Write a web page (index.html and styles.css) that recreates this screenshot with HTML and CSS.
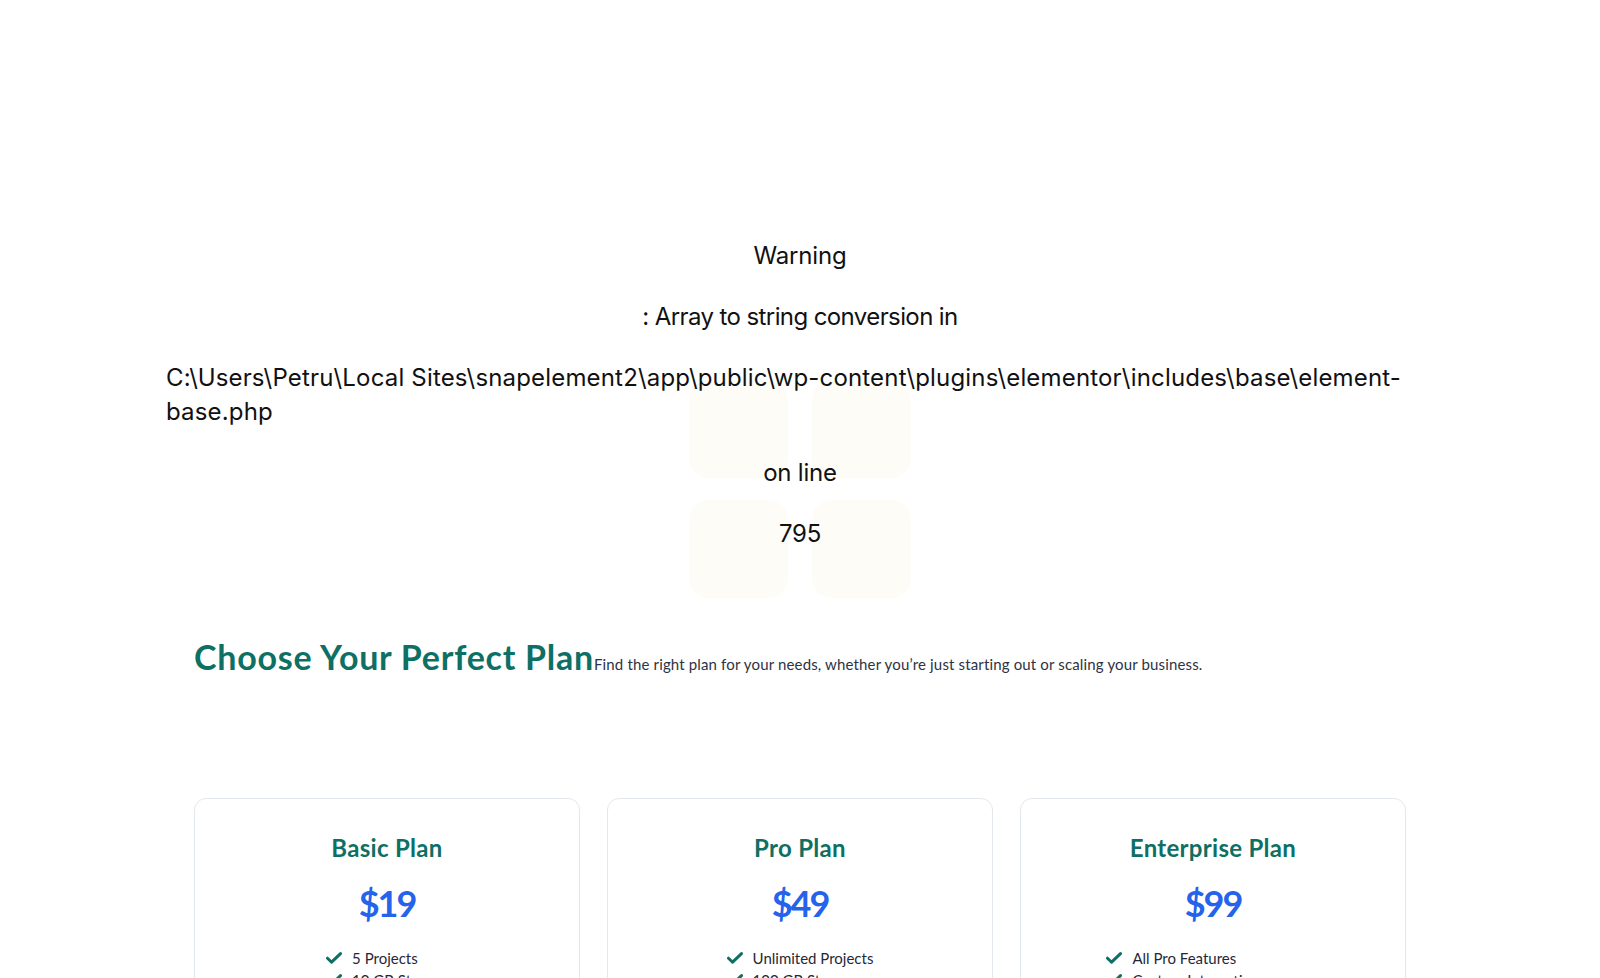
FILE: index.html
```html
<!DOCTYPE html>
<html lang="en">
<head>
<meta charset="utf-8">
<title>Pricing</title>
<link rel="stylesheet" href="styles.css">
</head>
<body>
<main class="page">
  <section class="warning">
    <div class="deco" aria-hidden="true">
      <span class="tile"></span><span class="tile"></span>
      <span class="tile"></span><span class="tile"></span>
    </div>
    <div class="wline"><b>Warning</b></div>
    <div class="wline tight">: Array to string conversion in</div>
    <div class="wline path"><b>C:\Users\Petru\Local Sites\snapelement2\app\public\wp-content\plugins\elementor\includes\base\element-base.php</b></div>
    <div class="wline">on line</div>
    <div class="wline"><b>795</b></div>
  </section>

  <section class="pricing">
    <header class="pricing-head">
      <h2 class="pricing-title">Choose Your Perfect Plan</h2>
      <p class="pricing-sub">Find the right plan for your needs, whether you’re just starting out or scaling your business.</p>
    </header>
    <div class="plans">
      <article class="plan">
        <h3 class="plan-name">Basic Plan</h3>
        <div class="plan-price">$19</div>
        <ul class="features">
          <li><svg class="check" viewBox="0 0 16 12"><path d="M1.5 6.2 5.6 10.2 14.5 1.6"/></svg>5 Projects</li>
          <li><svg class="check" viewBox="0 0 16 12"><path d="M1.5 6.2 5.6 10.2 14.5 1.6"/></svg>10 GB Storage</li>
          <li><svg class="check" viewBox="0 0 16 12"><path d="M1.5 6.2 5.6 10.2 14.5 1.6"/></svg>Email Support</li>
        </ul>
      </article>
      <article class="plan">
        <h3 class="plan-name">Pro Plan</h3>
        <div class="plan-price">$49</div>
        <ul class="features">
          <li><svg class="check" viewBox="0 0 16 12"><path d="M1.5 6.2 5.6 10.2 14.5 1.6"/></svg>Unlimited Projects</li>
          <li><svg class="check" viewBox="0 0 16 12"><path d="M1.5 6.2 5.6 10.2 14.5 1.6"/></svg>100 GB Storage</li>
          <li><svg class="check" viewBox="0 0 16 12"><path d="M1.5 6.2 5.6 10.2 14.5 1.6"/></svg>Priority Support</li>
        </ul>
      </article>
      <article class="plan">
        <h3 class="plan-name">Enterprise Plan</h3>
        <div class="plan-price">$99</div>
        <ul class="features">
          <li><svg class="check" viewBox="0 0 16 12"><path d="M1.5 6.2 5.6 10.2 14.5 1.6"/></svg>All Pro Features</li>
          <li><svg class="check" viewBox="0 0 16 12"><path d="M1.5 6.2 5.6 10.2 14.5 1.6"/></svg>Custom Integrations</li>
          <li><svg class="check" viewBox="0 0 16 12"><path d="M1.5 6.2 5.6 10.2 14.5 1.6"/></svg>Dedicated Account Manager</li>
        </ul>
      </article>
    </div>
  </section>
</main>
</body>
</html>
```

FILE: styles.css
```css
* { box-sizing: border-box; }
html, body { margin: 0; padding: 0; background: #fff; }
body {
  font-family: "Inter", "Liberation Sans", sans-serif;
  color: #111;
  width: 1600px;
  height: 978px;
  overflow: hidden;
}
.page { display: flex; flex-direction: column; align-items: center; }

.warning {
  position: relative;
  width: 1268px;
  padding-top: 239px;
  display: flex;
  flex-direction: column;
  align-items: center;
  gap: 27px;
  font-size: 24px;
  line-height: 34px;
  letter-spacing: -0.2px;
}
.warning b { font-weight: 400; }
.wline { position: relative; z-index: 1; }
.wline.tight { letter-spacing: -0.6px; }
.wline.path { align-self: stretch; text-align: left; letter-spacing: 0.17px; }

.deco {
  position: absolute;
  left: 523px;
  top: 380px;
  display: grid;
  grid-template-columns: 99px 99px;
  grid-template-rows: 98px 98px;
  column-gap: 24px;
  row-gap: 22px;
  z-index: 0;
}
.tile { background: #fdfcf6; border-radius: 20px; }

.pricing {
  width: 1212px;
  padding-top: 85px;
  font-family: "Lato", "Liberation Sans", sans-serif;
}
.pricing-head { display: flex; align-items: baseline; }
.pricing-title {
  margin: 0;
  font-size: 34px;
  line-height: 42px;
  font-weight: 700;
  letter-spacing: 0.75px;
  color: #0e7064;
}
.pricing-sub {
  margin: 0;
  font-size: 15px;
  letter-spacing: 0.15px;
  color: #2d3344;
}
.plans {
  margin-top: 120px;
  display: grid;
  grid-template-columns: repeat(3, 1fr);
  column-gap: 27px;
}
.plan {
  border: 1px solid #e3e8ef;
  border-radius: 12px;
  padding: 34px 20px 30px;
  display: flex;
  flex-direction: column;
  align-items: center;
  height: 260px;
}
.plan-name {
  margin: 0;
  font-size: 24px;
  line-height: 30px;
  font-weight: 700;
  letter-spacing: 0.3px;
  color: #0e7064;
}
.plan-price {
  margin-top: 16px;
  font-size: 36px;
  line-height: 48px;
  font-weight: 700;
  letter-spacing: -2px;
  color: #2563eb;
}
.features {
  list-style: none;
  margin: 20px 0 0;
  padding: 0;
  font-size: 15px;
  line-height: 22px;
  color: #1f2937;
}
.features li { display: flex; align-items: center; gap: 10px; }
.check { width: 16px; height: 12px; fill: none; stroke: #0e7064; stroke-width: 3; stroke-linecap: round; stroke-linejoin: round; }
```
